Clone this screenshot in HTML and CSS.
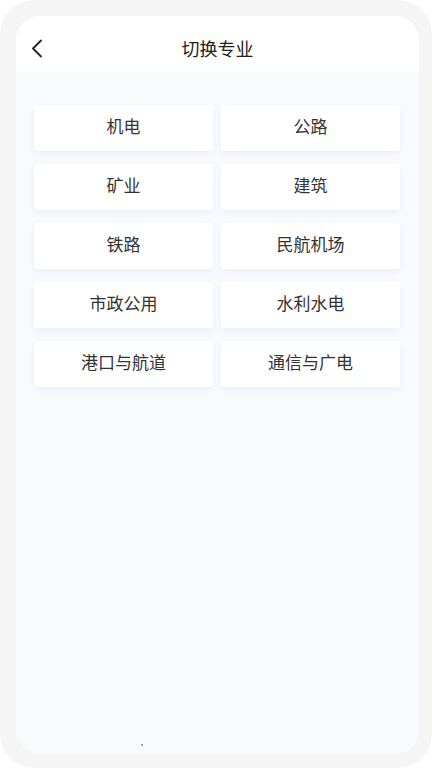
FILE: index.html
```html
<!DOCTYPE html>
<html lang="zh">
<head>
<meta charset="utf-8">
<title>切换专业</title>
<link rel="stylesheet" href="styles.css">
</head>
<body>
<div class="frame">
  <div class="card">
    <header class="header">
      <svg class="back" width="14" height="20" viewBox="0 0 14 20"><path d="M10 1.5 L2 9.5 L10 17.5" fill="none" stroke="#222" stroke-width="1.8" stroke-linecap="round" stroke-linejoin="round"/></svg>
      <h1 class="title">切换专业</h1>
    </header>
    <main class="content">
      <div class="grid">
        <div class="item">机电</div>
        <div class="item">公路</div>
        <div class="item">矿业</div>
        <div class="item">建筑</div>
        <div class="item">铁路</div>
        <div class="item">民航机场</div>
        <div class="item">市政公用</div>
        <div class="item">水利水电</div>
        <div class="item">港口与航道</div>
        <div class="item">通信与广电</div>
      </div>
      <div class="dot"></div>
    </main>
  </div>
</div>
</body>
</html>
```
FILE: styles.css
```css
html, body {
  margin: 0;
  padding: 0;
  background: #ffffff;
}
body {
  width: 432px;
  height: 768px;
  font-family: "Noto Sans CJK SC", "Noto Sans", sans-serif;
}
.frame {
  box-sizing: border-box;
  width: 432px;
  height: 768px;
  background: #f5f5f5;
  border-radius: 34px;
  padding: 16px 13px 14px 16px;
  display: flex;
}
.card {
  flex: 1;
  display: flex;
  flex-direction: column;
  background: #f8fafd;
  border-radius: 24px;
  overflow: hidden;
}
.header {
  position: relative;
  height: 56px;
  background: #ffffff;
  display: flex;
  align-items: center;
  justify-content: center;
  flex-shrink: 0;
}
.back {
  position: absolute;
  left: 15px;
  top: 23px;
}
.title {
  margin: 0;
  font-size: 18px;
  font-weight: 400;
  color: #222222;
  line-height: 1;
  padding-top: 7px;
}
.content {
  flex: 1;
  position: relative;
  padding: 33px 19px 0 18px;
}
.grid {
  display: grid;
  grid-template-columns: 1fr 1fr;
  column-gap: 8px;
  row-gap: 13px;
}
.item {
  box-sizing: border-box;
  height: 46px;
  padding-bottom: 5px;
  background: #ffffff;
  border-radius: 3px;
  box-shadow: 0 3px 6px rgba(205, 215, 235, 0.3);
  display: flex;
  align-items: center;
  justify-content: center;
  font-size: 17px;
  color: #333333;
}
.dot {
  position: absolute;
  left: 125px;
  bottom: 8px;
  width: 2px;
  height: 2px;
  background: #3aa99c;
  border-radius: 1px;
}
```
